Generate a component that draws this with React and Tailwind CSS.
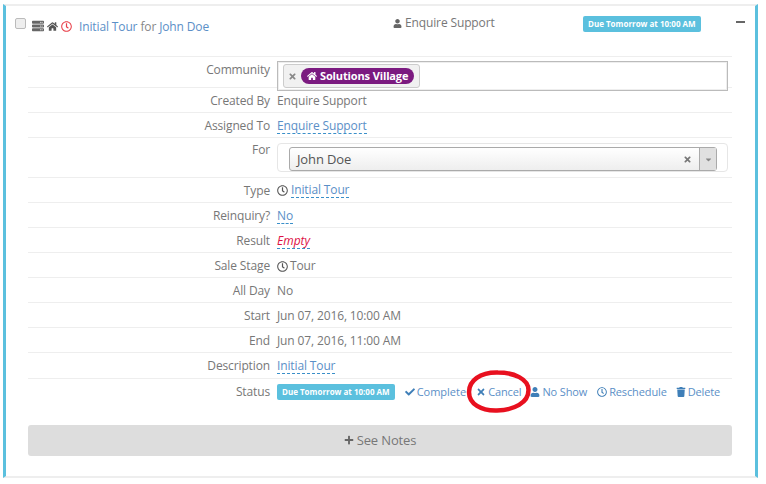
import React from 'react'
import { FaHome, FaUser, FaRegClock, FaCheck, FaTimes, FaTrash, FaPlus, FaCaretDown, FaServer } from 'react-icons/fa'

function Row({ label, children, className = 'h-[25px]', labelClass = 'pt-[4px]' }) {
  return (
    <div className={`flex border-t border-[#eeeeee] ${className}`}>
      <div className={`w-[242px] shrink-0 text-right text-[#777] ${labelClass}`}>{label}</div>
      <div className="ml-[7px] min-w-0 flex-1 pt-[4px] text-[#777]">{children}</div>
    </div>
  )
}

function Editable({ children, className = 'text-[#5b8fc7]' }) {
  return <span className={`inline-block border-b border-dashed border-[#3a8fc9] leading-[15px] ${className}`}>{children}</span>
}

function Action({ icon: Icon, children, className = '' }) {
  return (
    <span className={`flex items-center gap-[2px] text-[#5b8fc7] ${className}`}>
      <Icon className="text-[10px] text-[#3f7fb8]" />
      {children}
    </span>
  )
}

export default function App() {
  return (
    <div className="relative h-[484px] w-[766px] overflow-hidden bg-white pl-[3px] pt-1 font-['Open_Sans',sans-serif] text-[12px] leading-[18px] tracking-[-0.13px]">
      <div className="h-[474px] w-[755px] border-x-[3px] border-t-[2px] border-b-[2px] border-x-[#5bc0de] border-t-[#eeeeee] border-b-[#eeeeee] bg-white">
        {/* header row */}
        <div className="flex h-[50px] items-start">
          <div className="ml-[9px] mt-[12px] h-[11px] w-[11px] rounded-[2px] border border-[#bbb] bg-[#eeeeee]" />
          <FaServer className="ml-[6px] mt-[14px] text-[12px] text-[#666]" />
          <FaHome className="ml-[3px] mt-[15px] text-[11px] text-[#555]" />
          <FaRegClock className="ml-[3px] mt-[15px] text-[11px] text-[#e8404a]" />
          <div className="ml-[7px] mt-[12px] w-[300px] text-[#888]">
            <span className="text-[#5b8fc7]">Initial Tour</span> for <span className="text-[#5b8fc7]">John Doe</span>
          </div>
          <div className="ml-[14px] mt-[8px] flex w-[190px] items-center gap-[3px] text-[#777]">
            <FaUser className="text-[9px] text-[#666]" />
            Enquire Support
          </div>
          <span className="ml-0 mt-[10px] rounded-[2px] bg-[#5bc0de] px-[5px] py-[3px] text-[8px] font-bold leading-[10px] tracking-normal text-white">
            Due Tomorrow at 10:00 AM
          </span>
          <div className="ml-[35px] mt-[15px] h-[2px] w-[9px] bg-[#666]" />
        </div>

        {/* details */}
        <div className="ml-[22px] w-[704px]">
          <Row label="Community" className="h-[31px]">
            <div className="relative flex h-[30px] w-[451px] items-center border border-[#bbb] bg-white pl-[5px] shadow-[inset_0_0_0_1px_#eee]">
              <div className="flex h-[24px] items-center gap-[4px] rounded-[3px] border border-[#ccc] bg-[#f1f1f1] pl-[4px] pr-[5px]">
                <FaTimes className="text-[9px] text-[#888]" />
                <span className="flex h-[16px] items-center gap-[3px] rounded-full bg-[#7b1a80] px-[6px] text-[11px] font-bold text-white">
                  <FaHome className="text-[10px]" />
                  Solutions Village
                </span>
              </div>
            </div>
          </Row>
          <Row label="Created By">Enquire Support</Row>
          <Row label="Assigned To"><Editable>Enquire Support</Editable></Row>
          <Row label="For" className="h-[40px]" labelClass="pt-[3px]">
            <div className="mt-[1px] flex h-[29px] w-[451px] items-end rounded-[4px] border border-[#e6e6e6] pl-[11px]">
              <div className="flex h-[24px] w-[428px] items-center rounded-[3px] border border-[#aaa] bg-gradient-to-b from-white to-[#eeeeee] pl-[7px] text-[13px] text-[#555]">
                <span className="flex-1">John Doe</span>
                <FaTimes className="mr-[7px] text-[9px] text-[#777]" />
                <div className="flex h-full w-[17px] items-center justify-center border-l border-[#aaa] bg-[#e0e0e0]">
                  <FaCaretDown className="text-[9px] text-[#888]" />
                </div>
              </div>
            </div>
          </Row>
          <Row label="Type">
            <span className="inline-flex items-center gap-[3px]">
              <FaRegClock className="text-[11px] text-[#555]" />
              <Editable>Initial Tour</Editable>
            </span>
          </Row>
          <Row label="Reinquiry?"><Editable>No</Editable></Row>
          <Row label="Result"><Editable className="italic tracking-normal text-[#dd1144]">Empty</Editable></Row>
          <Row label="Sale Stage">
            <span className="inline-flex items-center gap-[2px]">
              <FaRegClock className="text-[11px] text-[#555]" />
              Tour
            </span>
          </Row>
          <Row label="All Day">No</Row>
          <Row label="Start">Jun 07, 2016, 10:00 AM</Row>
          <Row label="End">Jun 07, 2016, 11:00 AM</Row>
          <Row label="Description" className="h-[26px]"><Editable>Initial Tour</Editable></Row>
          <Row label="Status" className="h-[47px]">
            <div className="flex items-center text-[11px]">
              <span className="rounded-[2px] bg-[#5bc0de] px-[5px] py-[3px] text-[8px] font-bold leading-[10px] tracking-normal text-white">
                Due Tomorrow at 10:00 AM
              </span>
              <Action icon={FaCheck} className="ml-[10px] tracking-normal">Complete</Action>
              <Action icon={FaTimes} className="ml-[10px]">Cancel</Action>
              <Action icon={FaUser} className="ml-[9px]">No Show</Action>
              <Action icon={FaRegClock} className="ml-[10px]">Reschedule</Action>
              <Action icon={FaTrash} className="ml-[9px]">Delete</Action>
            </div>
          </Row>
          <div className="flex h-[31px] items-center justify-center gap-[3px] rounded-[3px] bg-[#dddddd] pb-[1px] text-[13px] text-[#777]">
            <FaPlus className="text-[10px] text-[#666]" />
            See Notes
          </div>
        </div>
      </div>

      {/* hand drawn highlight over the Cancel action */}
      <svg className="absolute left-[460px] top-[365px]" width="75" height="55" viewBox="0 0 75 55">
        <path d="M38 7.5 C20 7 9 16 9 27 C9 39 21 46 37 45.5 C54 45 68.5 38 68.5 25 C68.5 14 54 7.5 38 7.5 Z" fill="none" stroke="#e8101f" strokeWidth="4.5" />
      </svg>
    </div>
  )
}
